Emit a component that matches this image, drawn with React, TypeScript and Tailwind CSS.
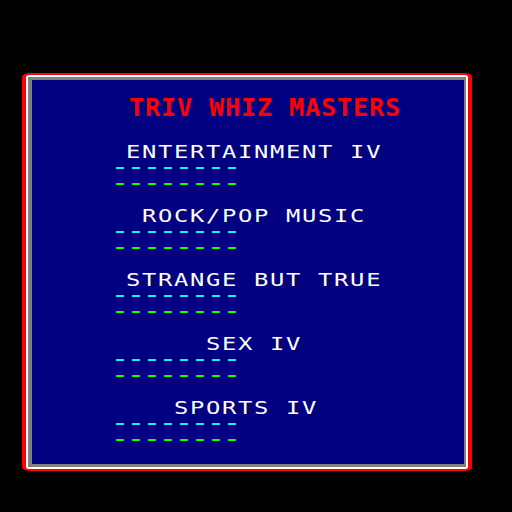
import React from "react";

type Category = {
  name: string;
  indent: string;
};

// each category sits on the 16px character grid of the quiz screen
const categories: Category[] = [
  { name: "ENTERTAINMENT IV", indent: "pl-[94px]" },
  { name: "ROCK/POP MUSIC", indent: "pl-[110px]" },
  { name: "STRANGE BUT TRUE", indent: "pl-[94px]" },
  { name: "SEX IV", indent: "pl-[174px]" },
  { name: "SPORTS IV", indent: "pl-[142px]" },
];

const DashRow: React.FC<{ color: string; className?: string }> = ({
  color,
  className,
}) => (
  <div className={`flex gap-2 pl-[84px] ${className ?? ""}`}>
    {Array.from({ length: 8 }).map((_, i) => (
      <span key={i} className={`block w-2 h-[2px] ${color}`} />
    ))}
  </div>
);

const App: React.FC = () => {
  return (
    <div className="w-[512px] h-[512px] bg-black pt-[73px] pl-[22px] font-['DejaVu_Sans_Mono',monospace]">
      {/* red / white / grey bevelled frame */}
      <div className="w-[450px] h-[398px] bg-[#ff0000] rounded-[8px/4px] border-[#ff0000] border-x-4 border-y-2">
        <div className="bg-white rounded-[4px/2px] border-2 border-white">
          <div className="border-[#808080] border-l-4 border-r-2 border-y-[3px]">
            <div className="w-[432px] h-[384px] bg-[#000080] flex flex-col pt-[15px]">
              <h1 className="pl-[97px] text-[25px] leading-none font-bold tracking-[0.95px] text-[#ff0000] whitespace-pre">
                TRIV WHIZ MASTERS
              </h1>

              <div className="mt-[24px] flex flex-col gap-[23px]">
                {categories.map((c) => (
                  <div key={c.name} className="flex flex-col">
                    <div className={`flex items-start h-[17px] ${c.indent}`}>
                      <span className="block origin-left scale-x-[1.4] text-[17px] leading-none tracking-[1.2px] text-white whitespace-pre">
                        {c.name}
                      </span>
                    </div>
                    <DashRow color="bg-[#00ffff]" className="mt-[6px]" />
                    <DashRow color="bg-[#00ff00]" className="mt-[14px]" />
                  </div>
                ))}
              </div>
            </div>
          </div>
        </div>
      </div>
    </div>
  );
};

export default App;
